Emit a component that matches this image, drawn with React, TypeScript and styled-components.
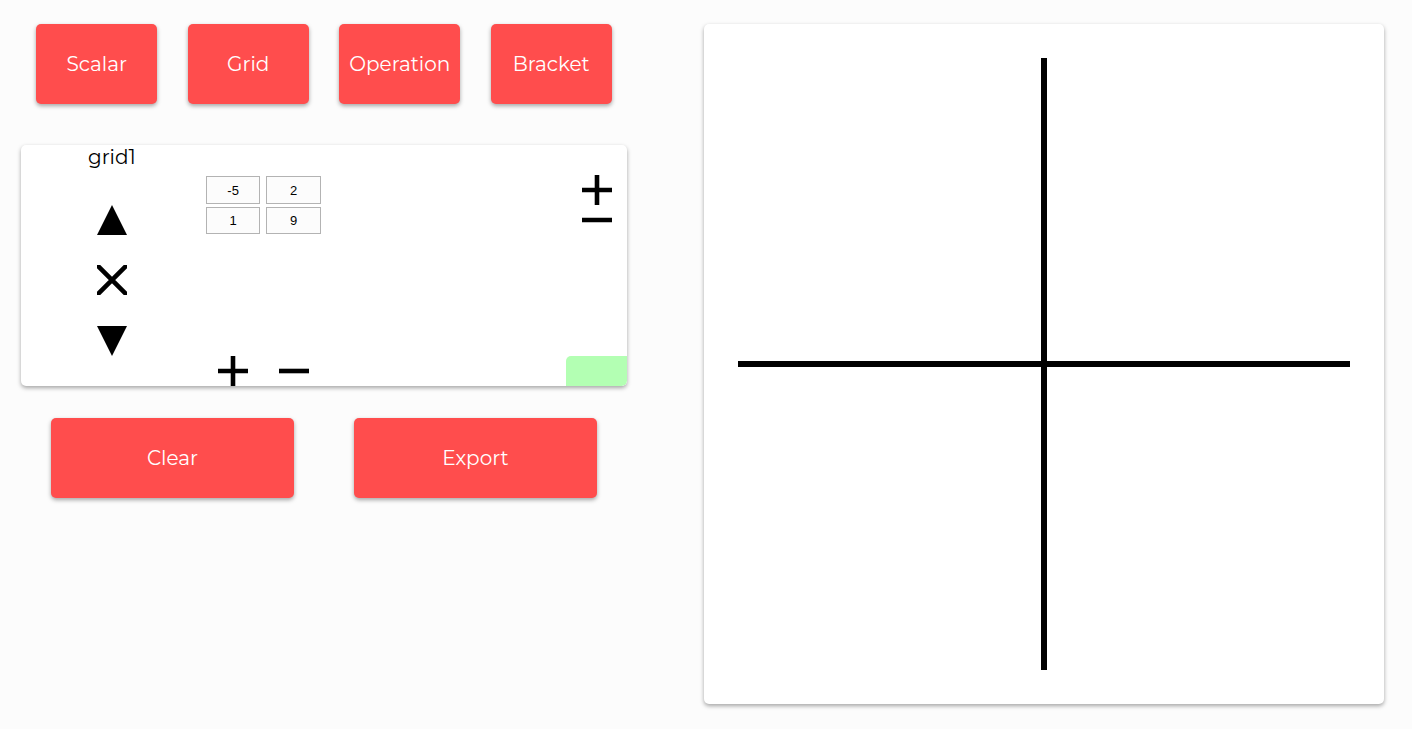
import React, { useState } from "react";
import styled, { createGlobalStyle, css } from "styled-components";

const GlobalStyle = createGlobalStyle`
  *, *::before, *::after { box-sizing: border-box; }
  body {
    margin: 0;
    background: #fcfcfc;
    color: #000;
    font-family: Montserrat, Inter, sans-serif;
    font-size: 20px;
    line-height: 24px;
  }
`;

const raised = css`
  border-radius: 5px;
  box-shadow: 0 2px 4px rgba(0, 0, 0, 0.35);
`;

const Page = styled.main`
  display: grid;
  grid-template-columns: 606fr 680fr;
  column-gap: 77px;
  align-items: start;
  padding: 24px 28px 24px 21px;
`;

const Controls = styled.div`
  display: flex;
  flex-direction: column;
`;

const ButtonRow = styled.div<{ $columns: number }>`
  display: grid;
  grid-template-columns: repeat(${(p) => p.$columns}, 1fr);
  justify-items: center;
`;

const ActionButton = styled.button`
  ${raised}
  width: 80%;
  height: 80px;
  padding: 0;
  border: 0;
  background: #ff4d4d;
  color: #fff;
  font: inherit;
  cursor: pointer;
`;

const GridCard = styled.section`
  ${raised}
  display: grid;
  grid-template-columns: repeat(10, 1fr);
  grid-template-rows: repeat(5, 30px) 31px repeat(2, 30px);
  margin: 41px 0 32px;
  overflow: hidden;
  background: #fff;
`;

const Name = styled.h2`
  grid-area: 1 / 1 / 2 / 4;
  margin: 0;
  font-size: 20px;
  font-weight: 400;
  line-height: 24px;
  text-align: center;
`;

const IconButton = styled.button<{ $row: number; $column: number; $span?: number }>`
  grid-row: ${(p) => p.$row};
  grid-column: ${(p) => p.$column} / span ${(p) => p.$span ?? 1};
  display: flex;
  justify-content: center;
  align-items: center;
  min-width: 0;
  padding: 0;
  border: 0;
  background: none;
  color: inherit;
  cursor: pointer;

  svg {
    width: 30px;
    height: 30px;
    fill: none;
    stroke: currentColor;
    stroke-width: 4.6;
  }
`;

const Values = styled.div`
  grid-area: 2 / 4 / 4 / 6;
  display: grid;
  grid-template-columns: repeat(2, 1fr);
  grid-template-rows: 28px 27px;
  row-gap: 3px;
  align-content: center;
  justify-items: center;
`;

const ValueInput = styled.input`
  width: 90%;
  min-width: 0;
  padding: 0;
  border: 1px solid #b3b3b3;
  background: #fcfcfc;
  font-family: Arial, "Liberation Sans", sans-serif;
  font-size: 13px;
  text-align: center;
`;

const StatusButton = styled.button`
  grid-area: 8 / 10;
  padding: 0;
  border: 0;
  border-radius: 5px 0 5px 0;
  background: #b3ffb3;
  cursor: pointer;
`;

const Plot = styled.section`
  ${raised}
  aspect-ratio: 1;
  background: #fff;

  svg {
    display: block;
    width: 100%;
    height: 100%;
  }
`;

const shapes = {
  up: <path d="M15 0 30 30H0Z" fill="currentColor" stroke="none" />,
  down: <path d="M0 0H30L15 30Z" fill="currentColor" stroke="none" />,
  cross: <path d="M1.5 1.5 28.5 28.5M28.5 1.5 1.5 28.5" strokeLinecap="round" />,
  plus: <path d="M0 15H30M15 0V30" />,
  minus: <path d="M0 15H30" />,
};

const cardActions: {
  label: string;
  shape: keyof typeof shapes;
  row: number;
  column: number;
  span?: number;
}[] = [
  { label: "Move up", shape: "up", row: 3, column: 1, span: 3 },
  { label: "Remove", shape: "cross", row: 5, column: 1, span: 3 },
  { label: "Move down", shape: "down", row: 7, column: 1, span: 3 },
  { label: "Add column", shape: "plus", row: 2, column: 10 },
  { label: "Remove column", shape: "minus", row: 3, column: 10 },
  { label: "Add row", shape: "plus", row: 8, column: 4 },
  { label: "Remove row", shape: "minus", row: 8, column: 5 },
];

export default function App() {
  const [values, setValues] = useState(["-5", "2", "1", "9"]);

  return (
    <>
      <GlobalStyle />
      <Page>
        <Controls>
          <ButtonRow $columns={4}>
            {["Scalar", "Grid", "Operation", "Bracket"].map((label) => (
              <ActionButton key={label} type="button">{label}</ActionButton>
            ))}
          </ButtonRow>
          <GridCard>
            <Name>grid1</Name>
            {cardActions.map((a) => (
              <IconButton
                key={a.label}
                type="button"
                aria-label={a.label}
                $row={a.row}
                $column={a.column}
                $span={a.span}
              >
                <svg viewBox="0 0 30 30" aria-hidden="true">{shapes[a.shape]}</svg>
              </IconButton>
            ))}
            <Values>
              {values.map((value, i) => (
                <ValueInput
                  key={i}
                  aria-label={`Value ${i + 1}`}
                  value={value}
                  onChange={(e) =>
                    setValues(values.map((v, j) => (j === i ? e.target.value : v)))
                  }
                />
              ))}
            </Values>
            <StatusButton type="button" aria-label="Apply" />
          </GridCard>
          <ButtonRow $columns={2}>
            {["Clear", "Export"].map((label) => (
              <ActionButton key={label} type="button">{label}</ActionButton>
            ))}
          </ButtonRow>
        </Controls>
        <Plot aria-label="Plot">
          <svg viewBox="0 0 680 680" stroke="#000" strokeWidth="6" aria-hidden="true">
            <path d="M34 340H646M340 34V646" />
          </svg>
        </Plot>
      </Page>
    </>
  );
}
